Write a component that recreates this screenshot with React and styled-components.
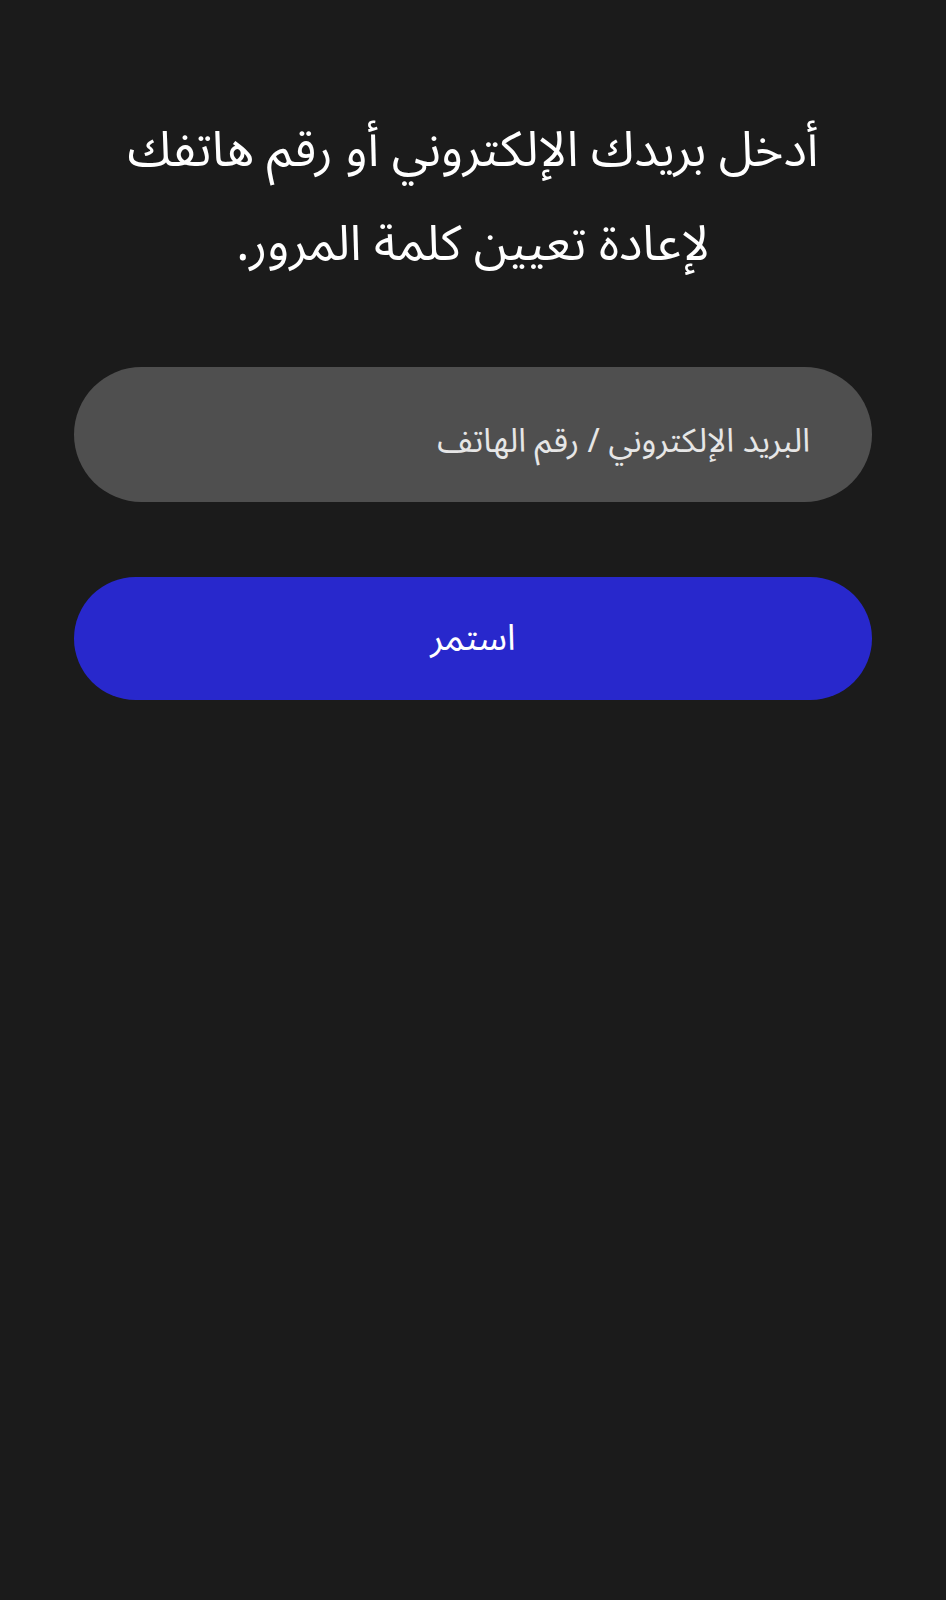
import React from "react";
import styled, { createGlobalStyle } from "styled-components";

const GlobalStyle = createGlobalStyle`
  html, body {
    margin: 0;
    padding: 0;
    background: #1b1b1b;
  }
  body {
    font-family: "Noto Sans Arabic", "DejaVu Sans", sans-serif;
  }
`;

const Page = styled.div`
  min-height: 1600px;
  background: #1b1b1b;
  direction: rtl;
  display: flex;
  flex-direction: column;
  padding: 104px 74px 0;
  box-sizing: border-box;
`;

const Title = styled.h1`
  margin: 0 0 75px;
  color: #ffffff;
  font-size: 49px;
  font-weight: 400;
  line-height: 94px;
  text-align: center;
`;

const Field = styled.input`
  height: 135px;
  box-sizing: border-box;
  border: none;
  border-radius: 68px;
  background: #4f4f4f;
  color: #ffffff;
  font-family: inherit;
  font-size: 33px;
  padding: 14px 62px 0;
  direction: rtl;
  outline: none;

  &::placeholder {
    color: #e6e6e6;
  }
`;

const Button = styled.button`
  margin-top: 75px;
  height: 123px;
  border: none;
  border-radius: 62px;
  background: #2828cc;
  color: #ffffff;
  font-family: inherit;
  font-size: 36px;
  cursor: pointer;
`;

export default function App() {
  return (
    <>
      <GlobalStyle />
      <Page>
        <Title>
          أدخل بريدك الإلكتروني أو رقم هاتفك
          <br />
          لإعادة تعيين كلمة المرور.
        </Title>
        <Field placeholder="البريد الإلكتروني / رقم الهاتف" />
        <Button>استمر</Button>
      </Page>
    </>
  );
}
